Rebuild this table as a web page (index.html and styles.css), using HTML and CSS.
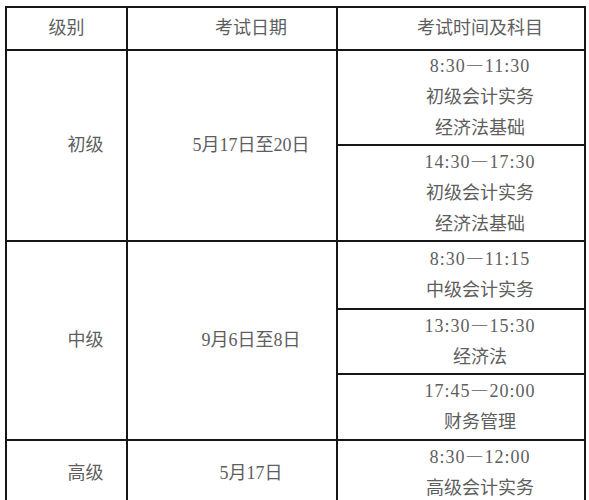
FILE: index.html
```html
<!DOCTYPE html>
<html lang="zh-CN">
<head>
<meta charset="utf-8">
<title>考试时间安排</title>
<link rel="stylesheet" href="styles.css">
</head>
<body>
<table class="exam">
  <colgroup>
    <col class="c-level">
    <col class="c-date">
    <col class="c-time">
  </colgroup>
  <thead>
    <tr class="r-head">
      <th class="first">级别</th>
      <th>考试日期</th>
      <th>考试时间及科目</th>
    </tr>
  </thead>
  <tbody>
    <tr class="r-94">
      <td rowspan="2">初级</td>
      <td rowspan="2" class="date">5月17日至20日</td>
      <td><span class="time">8:30<span class="dash">—</span>11:30</span><br>初级会计实务<br>经济法基础</td>
    </tr>
    <tr class="r-96">
      <td><span class="time">14:30<span class="dash">—</span>17:30</span><br>初级会计实务<br>经济法基础</td>
    </tr>
    <tr class="r-68">
      <td rowspan="3">中级</td>
      <td rowspan="3" class="date">9月6日至8日</td>
      <td><span class="time">8:30<span class="dash">—</span>11:15</span><br>中级会计实务</td>
    </tr>
    <tr class="r-65">
      <td><span class="time">13:30<span class="dash">—</span>15:30</span><br>经济法</td>
    </tr>
    <tr class="r-66">
      <td><span class="time">17:45<span class="dash">—</span>20:00</span><br>财务管理</td>
    </tr>
    <tr class="r-66">
      <td>高级</td>
      <td class="date">5月17日</td>
      <td><span class="time">8:30<span class="dash">—</span>12:00</span><br>高级会计实务</td>
    </tr>
  </tbody>
</table>
</body>
</html>
```

FILE: styles.css
```css
html, body {
  margin: 0;
  padding: 0;
  background: #ffffff;
}

body {
  padding: 6px 0 0 5px;
  font-family: "Liberation Serif", "Noto Sans CJK SC", serif;
  font-size: 18px;
  color: #5e5e5e;
}

.exam {
  border-collapse: collapse;
  table-layout: fixed;
  width: 579px;
}

.c-level { width: 121px; }
.c-date { width: 210px; }
.c-time { width: 248px; }

.exam th,
.exam td {
  border: 2px solid #161616;
  padding: 0 0 0 38px;
  text-align: center;
  vertical-align: middle;
  line-height: 31px;
  font-weight: 400;
}

.exam th.first {
  padding-left: 0;
}

.time {
  letter-spacing: 1px;
}

.dash {
  font-family: "Noto Sans CJK SC", sans-serif;
  letter-spacing: 0;
  margin-right: 1px;
  line-height: 0;
}

.r-head { height: 43px; }
.r-94 { height: 94px; }
.r-96 { height: 96px; }
.r-68 { height: 68px; }
.r-65 { height: 65px; }
.r-66 { height: 66px; }
```
